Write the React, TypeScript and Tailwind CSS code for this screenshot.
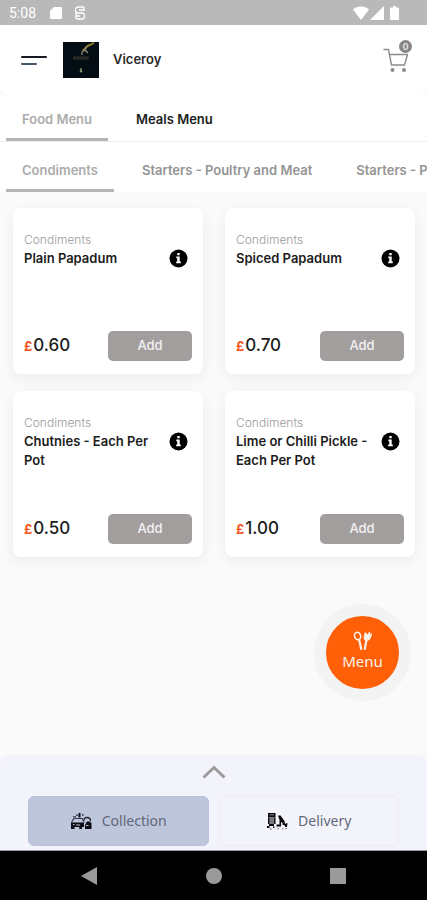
import React, { useState } from 'react';

interface MenuItem {
    id: number;
    category: string;
    name: string;
    price: string;
}

const ITEMS: MenuItem[] = [
    { id: 1, category: 'Condiments', name: 'Plain Papadum', price: '0.60' },
    { id: 2, category: 'Condiments', name: 'Spiced Papadum', price: '0.70' },
    { id: 3, category: 'Condiments', name: 'Chutnies - Each Per Pot', price: '0.50' },
    { id: 4, category: 'Condiments', name: 'Lime or Chilli Pickle - Each Per Pot', price: '1.00' },
];

const MENUS = ['Food Menu', 'Meals Menu'];
const CATEGORIES = ['Condiments', 'Starters - Poultry and Meat', 'Starters - P'];

const StatusBar: React.FC = () => (
    <div className="flex h-[25px] items-center bg-[#b9b9b9] pr-7 pl-[9px] text-white">
        <span className="font-[Roboto] text-sm">5:08</span>
        <svg className="ml-3.5 h-3.5 w-3" viewBox="0 0 12 14" fill="currentColor">
            <path d="M4 1h7a1 1 0 0 1 1 1v10a1 1 0 0 1-1 1H1a1 1 0 0 1-1-1V5z" />
        </svg>
        <svg className="ml-3 h-3.5 w-3" viewBox="0 0 12 14" fill="none" stroke="currentColor" strokeWidth="1.3">
            <path d="M10 1H4a2.500 2.500 0 0 0-2.500 2.500v1A2.500 2.500 0 0 0 4 7h4a2.500 2.500 0 0 1 2.500 2.500v1A2.500 2.500 0 0 1 8 13H4a2.500 2.500 0 0 1-2.500-2.500M10 1v4M5 4h5M2 7v3h4" />
        </svg>
        <svg className="ml-auto h-3.5 w-4" viewBox="0 0 16 14" fill="currentColor">
            <path d="M8 14 0 3.500C2 1.500 5 .5 8 .5s6 1 8 3z" />
        </svg>
        <svg className="ml-px h-3.5 w-3.5" viewBox="0 0 14 14" fill="currentColor">
            <path d="M14 0v14H0z" />
        </svg>
        <svg className="ml-1.5 h-3.5 w-[9px]" viewBox="0 0 9 14" fill="currentColor">
            <path d="M3 0h3v1.500h2a1 1 0 0 1 1 1V13a1 1 0 0 1-1 1H1a1 1 0 0 1-1-1V2.500a1 1 0 0 1 1-1h2z" />
        </svg>
    </div>
);

const Header: React.FC = () => (
    <header className="flex h-[70px] items-center rounded-b-lg bg-white pr-4 pl-[21px] shadow-[0_1px_2px_rgba(0,0,0,0.04)]">
        <button aria-label="Open navigation" className="flex w-[26px] flex-col gap-[5px]">
            <span className="h-0.5 w-full rounded-full bg-[#171a21]" />
            <span className="h-0.5 w-4 rounded-full bg-[#46566a]" />
        </button>
        <svg className="ml-4 size-9" viewBox="0 0 36 36">
            <rect width="36" height="36" fill="#030d13" />
            <path d="M31 0 24 3l-5 5 1 1 5-4 6-3z" fill="#8f7c2c" />
            <path d="M24 4l-2 4-3 2v3M22 8l3 3" stroke="#8d917f" strokeWidth="1.2" fill="none" />
            <path d="M10 14h16v4H10z" fill="#1b201f" />
            <path d="M11 16h14" stroke="#3d3c34" strokeDasharray="2 1" />
            <path d="M18 26l1 4h-2z" fill="#90a078" stroke="#90a078" strokeWidth=".6" />
        </svg>
        <h1 className="ml-3.5 text-[13px] font-semibold text-[#2a2a2a]">Viceroy</h1>
        <button aria-label="Basket" className="relative ml-auto h-7 w-7 text-[#8b8b8b]">
            <svg className="absolute bottom-0 left-0 size-[26px]" viewBox="0 0 26 26" fill="none" stroke="currentColor" strokeWidth="1.4" strokeLinecap="round" strokeLinejoin="round">
                <path d="M1 1.500h4.500L8.500 17h13L24.500 6.500H6.500" />
                <circle cx="9.500" cy="22" r="1.300" fill="currentColor" />
                <circle cx="21" cy="22" r="1.300" fill="currentColor" />
            </svg>
            <span className="absolute -top-1.5 -right-px flex size-[13px] items-center justify-center rounded-full bg-[#858585] text-[9px] font-bold text-[#e2e2e2]">0</span>
        </button>
    </header>
);

interface TabsProps {
    labels: string[];
    active: number;
    onChange: (index: number) => void;
    idle: string;
}

const Tabs: React.FC<TabsProps> = ({ labels, active, onChange, idle }) => (
    <nav className="flex gap-3 overflow-hidden bg-white pl-1.5">
        {labels.map((label, i) => (
            <button
                key={label}
                onClick={() => onChange(i)}
                className={`h-[46px] shrink-0 border-b-[3px] px-4 pt-1.5 text-[13px] font-semibold whitespace-nowrap ${active === i ? 'border-[#b8b4b4] text-[#acacac]' : `border-transparent ${idle}`}`}
            >
                {label}
            </button>
        ))}
    </nav>
);

const ItemCard: React.FC<{ item: MenuItem; onAdd: () => void }> = ({ item, onAdd }) => (
    <article className="flex min-h-[166px] flex-col rounded-lg bg-white px-[11px] pt-[23px] pb-[13px] shadow-[0_4px_14px_rgba(0,0,0,0.06)]">
        <p className="text-xs leading-[18px] font-light text-[#9a9a9a]">{item.category}</p>
        <div className="flex items-start justify-between gap-1">
            <h2 className="text-[13px] leading-[19px] font-semibold text-[#1c1c1c]">{item.name}</h2>
            <button aria-label={`About ${item.name}`} className="mr-1 shrink-0">
                <svg className="size-[19px]" viewBox="0 0 19 19">
                    <circle cx="9.500" cy="9.500" r="9" fill="#000" />
                    <path d="M8.300 4h2.400v2.200H8.300zM7.300 7.600h3.400v5h1.100v1.600H7.200v-1.600h1.100V9.200h-1z" fill="#fff" />
                </svg>
            </button>
        </div>
        <div className="mt-auto flex items-center justify-between">
            <p className="text-[17px] font-medium text-[#1c1c1c]">
                <span className="mr-px text-[13px] font-bold text-[#f6521c]">£</span>{item.price}
            </p>
            <button onClick={onAdd} className="h-[30px] w-[84px] rounded-[5px] bg-[#a39e9e] text-[13px] font-medium text-[#f2f2f2]">Add</button>
        </div>
    </article>
);

// spoon and fork
const CutleryIcon: React.FC = () => (
    <svg className="h-5 w-5" viewBox="0 0 20 20" fill="none" stroke="currentColor" strokeLinecap="round" strokeLinejoin="round">
        <ellipse cx="4.600" cy="5" rx="3" ry="3.800" strokeWidth="1.600" transform="rotate(-20 4.600 5)" />
        <path d="M6.200 9l2 9" strokeWidth="2.200" />
        <path d="M12.200 2 11.300 6c-.2 2 .6 3 2 3.300 2 .3 3.200-.6 3.900-2.500L18.600 3l-2.200 2 .2-3.600-2 3z" fill="currentColor" strokeWidth="1.200" />
        <path d="M13.500 9l-1.700 9" strokeWidth="2.200" />
    </svg>
);

// parked car with a person waiting beside it
const CollectionIcon: React.FC = () => (
    <svg className="h-[18px] w-[22px]" viewBox="0 0 22 18" fill="#0c0d12">
        <path d="M3 4h3v1.500H3zM6 2.500h2V4H6zM12 2h1.500v2H12z" fill="#4b5060" />
        <path d="M8.500 1h2v4.500h-2z" />
        <path d="M1.500 10.500 3.800 6.500h8.400l2 4" fill="none" stroke="#3a3e4c" strokeWidth="1.200" />
        <path d="M1 10.500h13v4.500H12v2H9.300v-2H4.500v2H1z" />
        <path d="M3 12h1.500v1H3zM6 12.500h4v1H6z" fill="#bec6dc" />
        <path d="M14 8.500c0-2 1-3 3-3s3.500 1.500 3.500 3.500" fill="none" stroke="#23262f" strokeWidth="1.300" />
        <path d="M17 9.500h3l1.500 2V17H15v-4z" />
        <path d="M16 13h2.500v1H16z" fill="#bec6dc" />
    </svg>
);

// courier scooter with a box on the back
const DeliveryIcon: React.FC = () => (
    <svg className="h-[18px] w-[22px]" viewBox="0 0 22 18" fill="#0a0a0c">
        <path d="M2 1h7.500v4.500H2z" />
        <path d="M3.500 2.300h4.500v1H3.500z" fill="#8c8d95" />
        <path d="M2.500 6h6.500v6H2.500z" fill="#777880" />
        <path d="M2 5.500h1.300V12H2zM8.200 5.500h1.300V12H8.200zM3 12h5v2H3z" />
        <path d="M12 3.500h2.500l4 5.500.5 4h-2.500v-2l-1.500-1v4.500H10.500v-2h3V8z" />
        <path d="M18 12l3.500-1-.5 4h-1.800zM1 14h2.500v2H1zM7 14.500h2l-1 1.500H7z" />
        <path d="M4 16.500h1.500v1H4zM11.500 16.500H13v.8h-1.500zM16 16.500h1.500v.8H16zM19.500 16.200H21v.8h-1.500z" fill="#4a4b52" />
    </svg>
);

interface OrderTypeProps {
    label: string;
    icon: React.ReactNode;
    selected: boolean;
    onSelect: () => void;
}

const OrderType: React.FC<OrderTypeProps> = ({ label, icon, selected, onSelect }) => (
    <button
        onClick={onSelect}
        aria-pressed={selected}
        className={`flex h-[50px] flex-1 items-center justify-center gap-2.5 rounded-md border font-['Noto_Sans',sans-serif] text-sm text-[#62687a] ${selected ? 'border-[#b9c2da] bg-[#bec6dc]' : 'border-[#ececf2] bg-[#f3f4fb]'}`}
    >
        {icon}
        {label}
    </button>
);

const SystemNav: React.FC = () => (
    <div className="flex h-[49px] items-center justify-between bg-black px-20 text-[#9a9a9a]">
        <button aria-label="Back">
            <svg className="size-[18px]" viewBox="0 0 18 18" fill="currentColor"><path d="M17 0v18L1 9z" /></svg>
        </button>
        <button aria-label="Home">
            <svg className="size-4" viewBox="0 0 16 16" fill="currentColor"><circle cx="8" cy="8" r="8" /></svg>
        </button>
        <button aria-label="Recent apps">
            <svg className="size-[18px]" viewBox="0 0 18 18" fill="currentColor"><path d="M1 1h16v16H1z" /></svg>
        </button>
    </div>
);

export default function App() {
    const [menu, setMenu] = useState(0);
    const [category, setCategory] = useState(0);
    const [orderType, setOrderType] = useState('Collection');
    const [, setBasket] = useState<MenuItem[]>([]);

    return (
        <div className="flex min-h-screen flex-col bg-[#fafafa] font-[Inter,sans-serif]">
            <StatusBar />
            <Header />
            <div className="border-b border-[#f0f0f0]">
                <Tabs labels={MENUS} active={menu} onChange={setMenu} idle="text-[#1c1c1c]" />
            </div>
            <div className="bg-white pt-1">
                <Tabs labels={CATEGORIES} active={category} onChange={setCategory} idle="text-[#949494]" />
            </div>

            <main className="relative flex-1">
                <div className="grid grid-cols-2 gap-x-[22px] gap-y-[17px] pt-4 pr-3 pb-6 pl-[13px]">
                    {ITEMS.map(item => (
                        <ItemCard key={item.id} item={item} onAdd={() => setBasket(prev => [...prev, item])} />
                    ))}
                </div>
                <button className="absolute right-4 bottom-[54px] flex size-[97px] flex-col items-center justify-center rounded-full border-12 border-[#f3f3f3] bg-[#fe5f07] pb-1 font-['Noto_Sans',sans-serif] text-[15px] leading-5 text-[#fff1e8]">
                    <CutleryIcon />
                    Menu
                </button>
            </main>

            <footer className="rounded-t-lg bg-[#f3f4fb]">
                <button aria-label="Expand" className="flex h-[41px] w-full items-center justify-center pb-2 text-[#9a9a9a]">
                    <svg className="h-3.5 w-6" viewBox="0 0 24 14" fill="none" stroke="currentColor" strokeWidth="3">
                        <path d="M1.500 12.500 12 2.500l10.500 10" />
                    </svg>
                </button>
                <div className="flex gap-2.5 border-b border-[#9a9a9a] px-7 pb-1">
                    <OrderType label="Collection" icon={<CollectionIcon />} selected={orderType === 'Collection'} onSelect={() => setOrderType('Collection')} />
                    <OrderType label="Delivery" icon={<DeliveryIcon />} selected={orderType === 'Delivery'} onSelect={() => setOrderType('Delivery')} />
                </div>
                <SystemNav />
            </footer>
        </div>
    );
}
